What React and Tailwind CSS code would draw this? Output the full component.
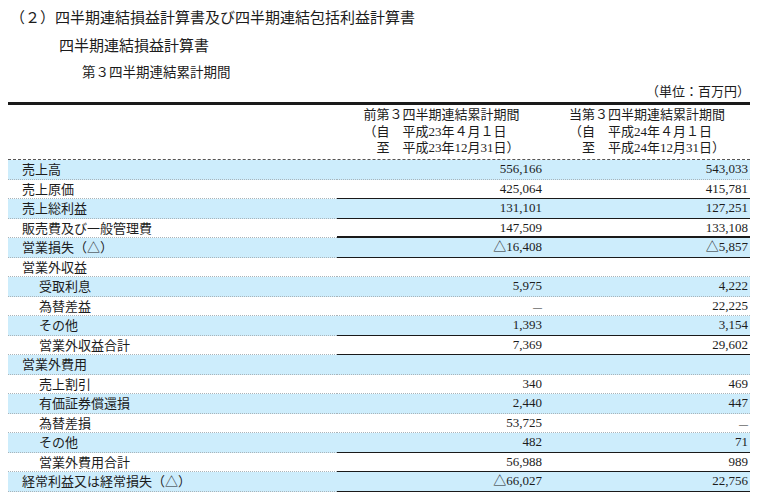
const rows = [
  { label: "売上高", a: "556,166", b: "543,033" },
  { label: "売上原価", a: "425,064", b: "415,781", line: "thin" },
  { label: "売上総利益", a: "131,101", b: "127,251", line: "thin" },
  { label: "販売費及び一般管理費", a: "147,509", b: "133,108", line: "thick" },
  { label: "営業損失（△）", a: "△16,408", b: "△5,857", line: "thin" },
  { label: "営業外収益" },
  { label: "受取利息", indent: true, a: "5,975", b: "4,222" },
  { label: "為替差益", indent: true, a: "—", b: "22,225" },
  { label: "その他", indent: true, a: "1,393", b: "3,154", line: "thin" },
  { label: "営業外収益合計", indent: true, a: "7,369", b: "29,602", line: "thin" },
  { label: "営業外費用" },
  { label: "売上割引", indent: true, a: "340", b: "469" },
  { label: "有価証券償還損", indent: true, a: "2,440", b: "447" },
  { label: "為替差損", indent: true, a: "53,725", b: "—" },
  { label: "その他", indent: true, a: "482", b: "71", line: "thin" },
  { label: "営業外費用合計", indent: true, a: "56,988", b: "989", line: "thin" },
  { label: "経常利益又は経常損失（△）", a: "△66,027", b: "22,756", line: "thin" },
];

const Num = ({ v }) =>
  v === "—" ? (
    <span className="text-[9px]">—</span>
  ) : (
    <span>{v}</span>
  );

const PeriodHead = ({ head, from, to }) => (
  <div className="w-[206px] flex flex-col items-center pt-[2px] leading-[16.5px]">
    <div>{head}</div>
    <div className="text-left">
      <div>{from}</div>
      <div>{to}</div>
    </div>
  </div>
);

export default function App() {
  return (
    <div className="w-[758px] h-[493px] overflow-hidden bg-white text-[#1c1c1c] font-['Liberation_Serif','Noto_Sans_CJK_JP',serif]">
      <div className="pl-[10px] pt-[8px] text-[15px] leading-[20px]">
        （２）四半期連結損益計算書及び四半期連結包括利益計算書
      </div>
      <div className="pl-[59px] mt-[8px] text-[15px] leading-[20px]">
        四半期連結損益計算書
      </div>
      <div className="pl-[82px] mt-[8px] text-[13.5px] leading-[18px]">
        第３四半期連結累計期間
      </div>
      <div className="mt-[2px] pr-[8px] text-right text-[13px] leading-[16px]">
        （単位：百万円）
      </div>

      <div className="ml-[8px] w-[742px] mt-[2px] text-[13px]">
        <div className="h-[3px] bg-[#1a1a1a]" />
        <div className="h-[55px] flex border-b border-dashed border-[#555]">
          <div className="w-[331px]" />
          <PeriodHead
            head="前第３四半期連結累計期間"
            from="（自　平成23年４月１日"
            to="　至　平成23年12月31日）"
          />
          <PeriodHead
            head="当第３四半期連結累計期間"
            from="（自　平成24年４月１日"
            to="　至　平成24年12月31日）"
          />
        </div>

        {rows.map((r, i) => (
          <div
            key={i}
            className={`flex h-[19.5px] leading-[18px] ${
              i % 2 === 0 ? "bg-[#cdedfc]" : "bg-white"
            }`}
          >
            <div
              className={`w-[329px] border-b border-dotted border-[#a9b4ba] font-['Noto_Sans_CJK_JP',sans-serif] ${
                r.indent ? "pl-[31px]" : "pl-[14px]"
              }`}
            >
              {r.label}
            </div>
            <div
              className={`flex-1 flex ${
                r.line === "thick"
                  ? "border-b-2 border-[#1a1a1a]"
                  : r.line === "thin"
                  ? "border-b border-[#1a1a1a]"
                  : "border-b border-dotted border-[#a9b4ba]"
              }`}
            >
              <div className="w-[208px] pr-[3px] text-right">
                {r.a && <Num v={r.a} />}
              </div>
              <div className="flex-1 pr-[2px] text-right">
                {r.b && <Num v={r.b} />}
              </div>
            </div>
          </div>
        ))}
      </div>
    </div>
  );
}
